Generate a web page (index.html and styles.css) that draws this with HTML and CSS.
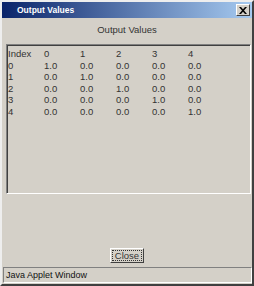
FILE: index.html
```html
<!DOCTYPE html>
<html lang="en">
<head>
  <meta charset="UTF-8" />
  <title>Output Values</title>
  <link rel="stylesheet" href="styles.css">
</head>
<body>
  <div class="window">
    <div class="titlebar">
      <span class="title">Output Values</span>
      <span class="close-x">
        <svg width="8" height="7" viewBox="0 0 8 7">
          <path d="M0 0h2l2 2.3L6 0h2L5 3.5 8 7H6L4 4.7 2 7H0l3-3.5z" fill="#000"/>
        </svg>
      </span>
    </div>

    <div class="heading">Output Values</div>

    <div class="panel">
      <div class="grid">
        <span>Index</span><span>0</span><span>1</span><span>2</span><span>3</span><span>4</span>
        <span>0</span><span>1.0</span><span>0.0</span><span>0.0</span><span>0.0</span><span>0.0</span>
        <span>1</span><span>0.0</span><span>1.0</span><span>0.0</span><span>0.0</span><span>0.0</span>
        <span>2</span><span>0.0</span><span>0.0</span><span>1.0</span><span>0.0</span><span>0.0</span>
        <span>3</span><span>0.0</span><span>0.0</span><span>0.0</span><span>1.0</span><span>0.0</span>
        <span>4</span><span>0.0</span><span>0.0</span><span>0.0</span><span>0.0</span><span>1.0</span>
      </div>
    </div>

    <div class="actions">
      <button class="btn"><span class="focus">Close</span></button>
    </div>

    <div class="statusbar">Java Applet Window</div>
  </div>
</body>
</html>
```

FILE: styles.css
```css
:root {
  --face: #d4d0c8;
  --shadow: #808080;
  --dark: #404040;
  --light: #ffffff;
}

body {
  margin: 0;
  font-family: 'Liberation Sans', Arial, sans-serif;
  background: var(--face);
}

.window {
  width: 254px;
  height: 286px;
  box-sizing: border-box;
  background: var(--face);
  border: 2px solid;
  border-color: #eeeeee var(--dark) var(--dark) #eeeeee;
  display: flex;
  flex-direction: column;
}

.titlebar {
  height: 16px;
  display: flex;
  align-items: center;
  justify-content: space-between;
  padding: 0 2px 0 15px;
  background: linear-gradient(90deg, #0a246a, #a6caf0);
  flex-shrink: 0;
}

.title {
  color: #fff;
  font-weight: bold;
  font-size: 8.5px;
}

.close-x {
  width: 12px;
  height: 10px;
  display: flex;
  align-items: center;
  justify-content: center;
  background: var(--face);
  border: 1px solid;
  border-color: var(--light) var(--dark) var(--dark) var(--light);
}

.heading {
  height: 26px;
  line-height: 23px;
  text-align: center;
  font-size: 9.5px;
  color: #333;
  flex-shrink: 0;
}

.panel {
  height: 150px;
  box-sizing: border-box;
  margin: 0 1px 0 4px;
  border: 1px solid;
  border-color: var(--shadow) var(--light) var(--light) var(--shadow);
  box-shadow: inset 1px 1px 0 var(--dark);
  padding: 3px 0 0 1px;
  flex-shrink: 0;
}

.grid {
  display: grid;
  grid-template-columns: repeat(6, 36px);
  font-size: 9.5px;
  line-height: 11.5px;
  color: #333;
}

.actions {
  flex: 1;
  display: flex;
  justify-content: center;
  align-items: flex-end;
  padding-bottom: 4px;
}

.btn {
  width: 34px;
  height: 15px;
  padding: 1px;
  box-sizing: border-box;
  background: var(--face);
  border: 1px solid;
  border-color: var(--light) var(--dark) var(--dark) var(--light);
  font-family: inherit;
  font-size: 9.5px;
  color: #333;
  display: flex;
}

.focus {
  flex: 1;
  border: 1px dotted #333;
  line-height: 9px;
  text-align: center;
}

.statusbar {
  height: 16px;
  margin: 0 0 1px 1px;
  box-sizing: border-box;
  border: 1px solid;
  border-color: var(--shadow) var(--light) var(--light) var(--shadow);
  font-size: 9px;
  line-height: 14px;
  padding-left: 2px;
  color: #111;
  flex-shrink: 0;
}
```
